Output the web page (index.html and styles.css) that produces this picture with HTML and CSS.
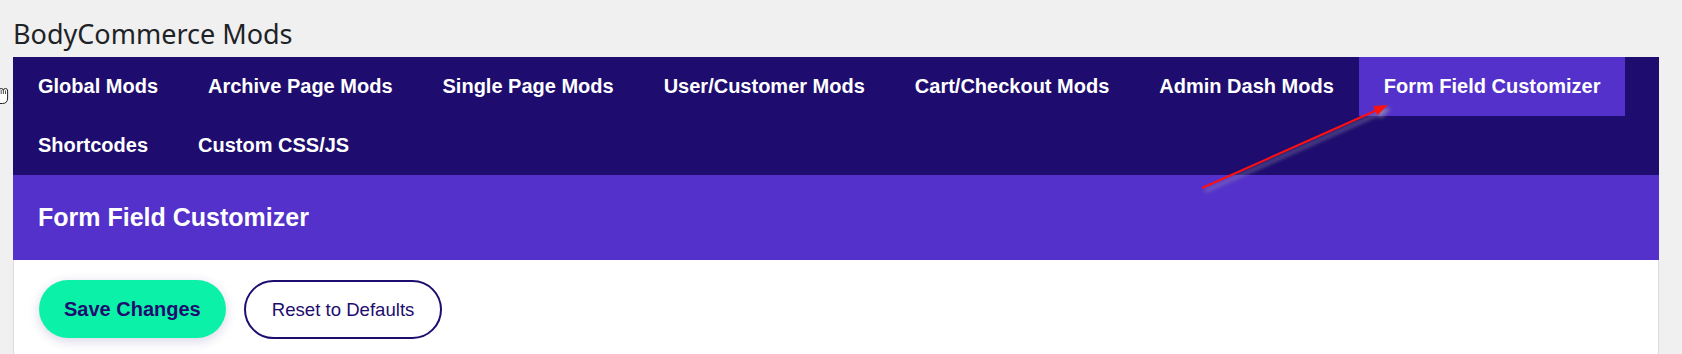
FILE: index.html
```html
<!DOCTYPE html>
<html>
<head lang="en">
    <meta charset="UTF-8">
    <title>BodyCommerce Mods</title>
    <link rel="stylesheet" href="styles.css">
</head>
<body>
    <div class="wrap">
        <h1 class="title">BodyCommerce Mods</h1>
        <nav class="tabs">
            <a class="tab">Global Mods</a>
            <a class="tab">Archive Page Mods</a>
            <a class="tab">Single Page Mods</a>
            <a class="tab">User/Customer Mods</a>
            <a class="tab">Cart/Checkout Mods</a>
            <a class="tab">Admin Dash Mods</a>
            <a class="tab active">Form Field Customizer</a>
            <a class="tab">Shortcodes</a>
            <a class="tab">Custom CSS/JS</a>
        </nav>
        <div class="panel-head">
            <h2>Form Field Customizer</h2>
        </div>
        <div class="panel-body">
            <div class="actions">
                <button class="btn btn-save">Save Changes</button>
                <button class="btn btn-reset">Reset to Defaults</button>
            </div>
        </div>
    </div>

    <!-- mouse pointer cut off at the left edge -->
    <svg class="cursor" width="10" height="20" viewBox="0 0 10 20">
        <path d="M-1 4 Q-1 1.5 1.2 1.5 Q3.4 1.5 3.4 3.6 Q3.4 1.5 5.5 1.5 Q7.6 1.5 7.6 4 L7.6 11 Q7.6 16.5 2.5 16.5 L-1 16.5 Z" fill="#fff" stroke="#222" stroke-width="1"/>
        <path d="M1.2 3 V7 M3.4 3.6 V7 M5.5 3.5 V7" stroke="#222" stroke-width="0.8" fill="none"/>
    </svg>

    <!-- red annotation arrow -->
    <svg class="arrow" width="210" height="105" viewBox="0 0 210 105">
        <line x1="12" y1="93" x2="186" y2="15.5" stroke="#ff1010" stroke-width="2"/>
        <polygon points="198,10 187.3,20.3 183.2,11.1" fill="#ff1010"/>
    </svg>
</body>
</html>
```

FILE: styles.css
```css
* {
    margin: 0;
    padding: 0;
    box-sizing: border-box;
}
html,body{
    background: #f0f0f0;
}
body{
    font-family: "Liberation Sans", Arial, sans-serif;
    overflow: hidden;
}
.wrap{
    padding: 0 23px 0 13px;
}
.title{
    font-family: "Noto Sans", "Open Sans", sans-serif;
    font-weight: normal;
    font-size: 27px;
    line-height: 36px;
    color: #1d2327;
    padding-top: 16px;
    margin-bottom: 5px;
}
.tabs{
    display: flex;
    flex-wrap: wrap;
    background: #1e0d6e;
}
.tabs .tab{
    display: block;
    padding: 0 25px;
    height: 59px;
    line-height: 59px;
    color: #fff;
    font-weight: bold;
    font-size: 20px;
    white-space: nowrap;
}
.tabs .tab.active{
    background: #5431cb;
}
.panel-head{
    background: #5431cb;
    height: 85px;
    padding-left: 25px;
}
.panel-head h2{
    color: #fff;
    font-size: 25px;
    line-height: 85px;
}
.panel-body{
    background: #fff;
    border-left: 1px solid #dcdcde;
    border-right: 1px solid #dcdcde;
    padding: 20px 25px 16px;
}
.actions{
    display: flex;
    align-items: flex-start;
    gap: 18px;
}
.btn{
    font-family: "Liberation Sans", Arial, sans-serif;
    color: #1e0d6e;
    border-radius: 30px;
    cursor: pointer;
}
.btn-save{
    background: #0bf1a8;
    border: none;
    height: 58px;
    padding: 0 25px;
    font-size: 20px;
    font-weight: bold;
    box-shadow: 0 3px 12px rgba(40,20,110,0.18);
}
.btn-reset{
    background: #fff;
    border: 2px solid #1e0d6e;
    height: 59px;
    padding: 0 26px;
    font-size: 18.6px;
}
.cursor{
    position: absolute;
    left: 0;
    top: 87px;
}
.arrow{
    position: absolute;
    left: 1190px;
    top: 95px;
    filter: drop-shadow(3px 3px 2px rgba(150,150,170,0.8));
}
```
